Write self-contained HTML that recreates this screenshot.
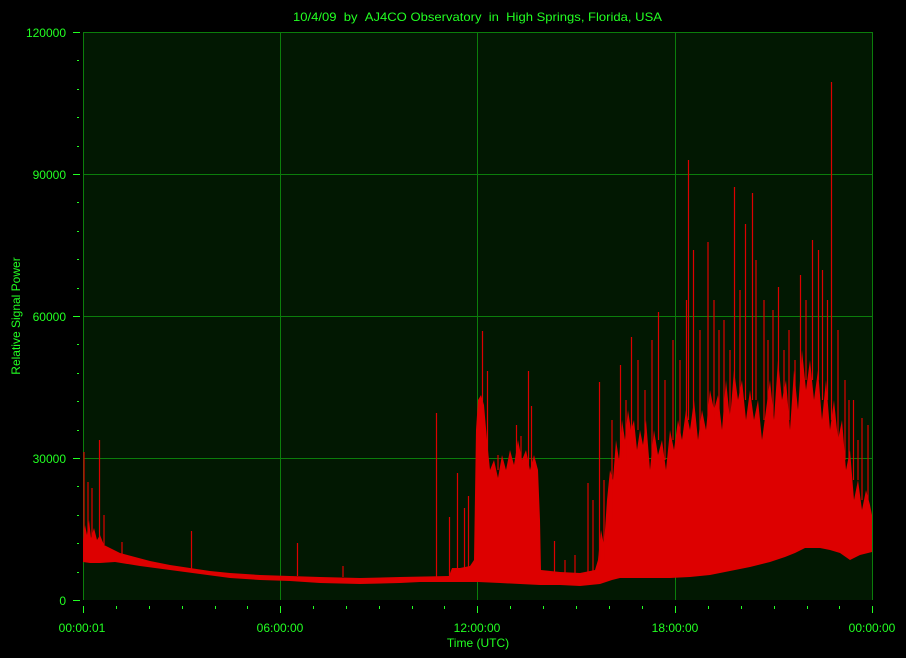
<!DOCTYPE html>
<html><head><meta charset="utf-8"><style>
html,body{margin:0;padding:0;background:#000;width:906px;height:658px;overflow:hidden}
svg{display:block}
text{font-family:"Liberation Sans",sans-serif;fill:#22ff22;font-size:12px;white-space:pre}
</style></head><body>
<svg width="906" height="658" viewBox="0 0 906 658" xmlns="http://www.w3.org/2000/svg">
<rect x="0" y="0" width="906" height="658" fill="#000"/>
<rect x="83" y="32" width="789" height="568" fill="#021802"/>
<g stroke="#0b7d0b" stroke-width="1" shape-rendering="crispEdges">
<line x1="83" y1="32.5" x2="872" y2="32.5"/>
<line x1="83" y1="174.5" x2="872" y2="174.5"/>
<line x1="83" y1="316.5" x2="872" y2="316.5"/>
<line x1="83" y1="458.5" x2="872" y2="458.5"/>
<line x1="83.5" y1="32" x2="83.5" y2="600"/>
<line x1="280.5" y1="32" x2="280.5" y2="600"/>
<line x1="477.5" y1="32" x2="477.5" y2="600"/>
<line x1="675.5" y1="32" x2="675.5" y2="600"/>
<line x1="872.5" y1="32" x2="872.5" y2="600"/>
</g>
<polygon fill="#dd0000" points="83,540 85,525 87,535 89,520 91,538 94,528 97,540 100,535 104,545 110,548 120,553 135,557 150,561 170,565 190,568 210,571 230,573 260,575 290,576 320,577 360,578 400,577 449,576 452,568 460,568 470,566 474,560 476,430 478,400 481,395 484,405 487,440 490,470 494,460 498,478 502,455 506,470 510,450 514,465 518,440 522,460 526,450 530,470 534,455 538,470 540,520 541,570 560,572 580,573 595,570 598,560 601,530 604,545 607,500 610,470 613,480 616,440 619,460 622,420 625,440 628,410 631,430 634,420 637,450 640,430 643,445 646,420 650,470 654,430 658,455 662,440 666,470 670,430 674,450 678,420 682,440 686,410 690,430 694,400 698,440 702,410 706,430 710,390 714,410 718,395 722,430 726,380 730,420 734,370 738,400 742,380 746,420 750,390 754,420 758,400 762,440 766,410 770,380 774,420 778,360 782,400 786,380 790,430 794,370 798,410 802,350 806,390 810,360 814,400 818,370 822,420 826,380 830,430 834,400 838,440 842,420 846,470 850,450 854,500 858,480 862,510 866,490 870,505 872,515 872,552 860,555 850,560 840,553 830,550 820,548 805,548 795,553 785,557 770,562 750,567 730,571 710,575 690,577 670,578 640,578 620,578 612,580 600,584 580,586 560,585 540,585 520,584 500,583 478,582 460,582 440,582 420,582 400,583 360,584 320,583 290,581 260,580 230,578 200,574 170,570 140,566 115,562 100,563 90,563 83,562"/>
<path stroke="#dd0000" stroke-width="1.2" fill="none" d="M84 560V452M88 540V482M92 540V488M99.5 545V440M104 545V515M122 555V542M191.5 570V531M297.5 576V543M343 577V566M436.5 578V413M449.5 576V517M457.5 570V473M464.5 570V508M468.5 570V496M482.5 450V331M487.5 460V371M498 470V455M516.5 470V425M521 470V436M528.5 470V371M531.5 470V406M554.5 575V541M565 575V560M575 575V555M588 573V483M593 573V500M599.5 560V382M604 560V480M612 520V420M620.5 460V365M626 460V400M631.5 440V337M638 430V360M645 460V390M652 460V340M658.5 440V312M665 460V380M673 440V340M680 440V360M686.5 420V300M688.5 420V160M693.5 420V250M700 440V330M708 420V242M714 420V300M719 420V330M724 420V320M730 420V350M734.5 400V187M740 400V290M745.5 400V224M752.5 400V193M756 400V260M764 420V300M768 420V340M773 420V310M778.5 400V287M784 420V350M789 420V330M795 420V360M800.5 380V275M806 380V300M812.5 380V240M818.5 380V250M822.5 400V270M827.5 400V300M831.5 420V82M838 440V330M845 460V380M849 460V400M853.5 480V400M858 480V440M862 500V418M868 500V425"/>
<path stroke="#22ff22" stroke-width="1" fill="none" shape-rendering="crispEdges" d="M73 32.5H80M73 174.5H80M73 316.5H80M73 458.5H80M73 600.5H80M77 60.5H79M77 89.5H79M77 117.5H79M77 146.5H79M77 202.5H79M77 231.5H79M77 259.5H79M77 288.5H79M77 344.5H79M77 373.5H79M77 401.5H79M77 430.5H79M77 486.5H79M77 515.5H79M77 543.5H79M77 572.5H79M83.5 606V613M280.5 606V613M477.5 606V613M675.5 606V613M872.5 606V613M116.5 606V609M149.5 606V609M182.5 606V609M215.5 606V609M247.5 606V609M313.5 606V609M346.5 606V609M379.5 606V609M412.5 606V609M444.5 606V609M510.5 606V609M543.5 606V609M576.5 606V609M609.5 606V609M642.5 606V609M708.5 606V609M741.5 606V609M774.5 606V609M807.5 606V609M839.5 606V609"/>
<text x="293" y="21" textLength="369" lengthAdjust="spacingAndGlyphs" xml:space="preserve">10/4/09&#160;&#160;by&#160;&#160;AJ4CO Observatory&#160;&#160;in&#160;&#160;High Springs, Florida, USA</text>
<g text-anchor="end">
<text x="66" y="37">120000</text>
<text x="66" y="179">90000</text>
<text x="66" y="321">60000</text>
<text x="66" y="463">30000</text>
<text x="66" y="605">0</text>
</g>
<g text-anchor="middle">
<text x="82" y="632">00:00:01</text>
<text x="280" y="632">06:00:00</text>
<text x="477" y="632">12:00:00</text>
<text x="675" y="632">18:00:00</text>
<text x="872" y="632">00:00:00</text>
<text x="478" y="647">Time (UTC)</text>
</g>
<text transform="translate(20,316) rotate(-90)" text-anchor="middle">Relative Signal Power</text>
</svg>
</body></html>
